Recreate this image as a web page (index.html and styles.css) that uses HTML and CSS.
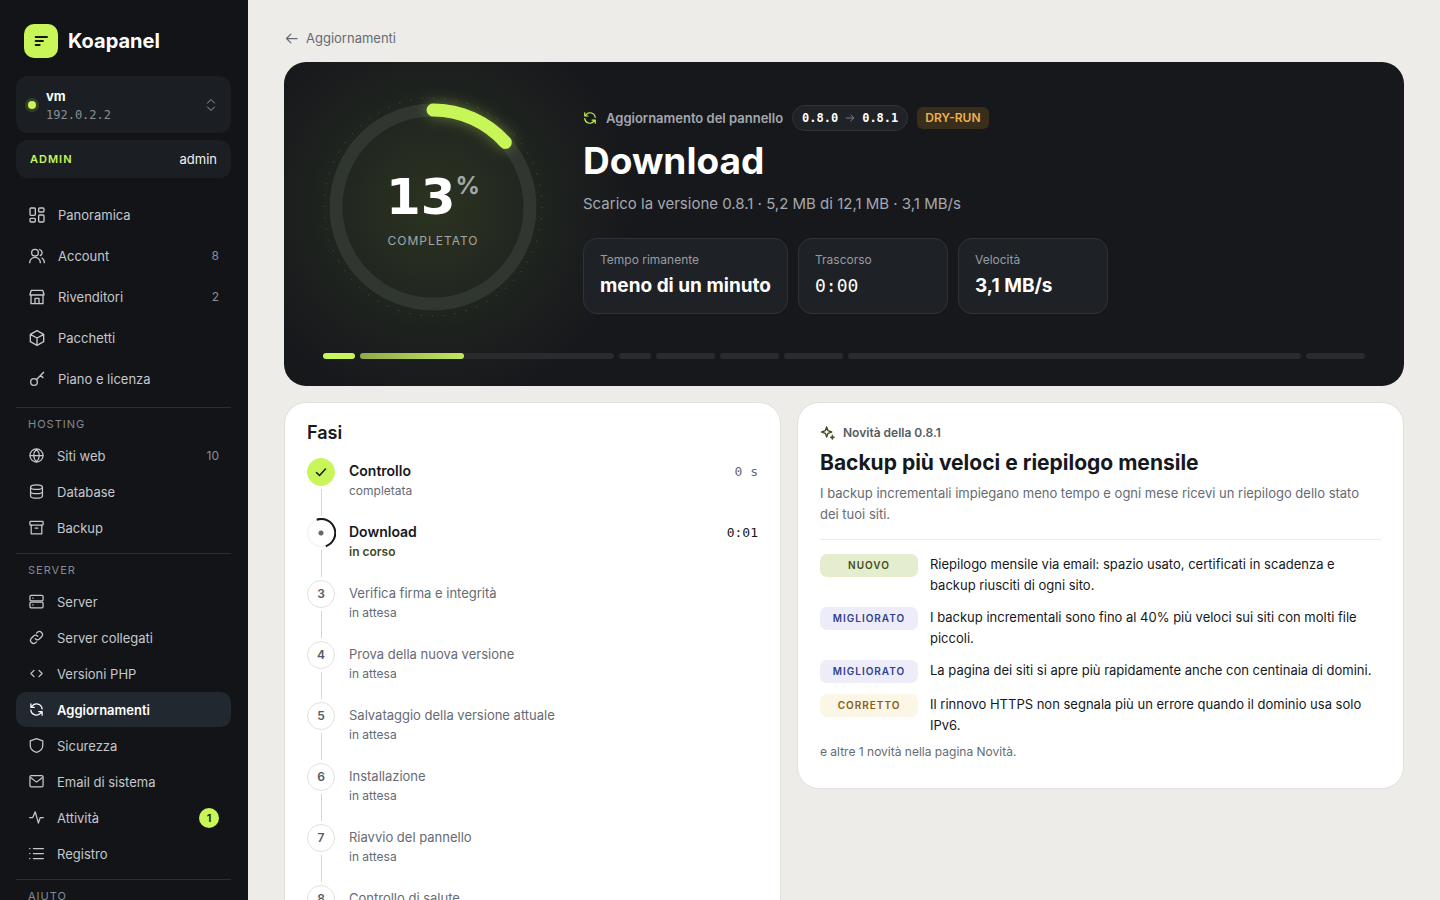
FILE: index.html
```html
<!DOCTYPE html>
<html lang="it">

<head>
    <meta charset="UTF-8">
    <meta name="viewport" content="width=device-width, initial-scale=1.0">
    <title>Aggiornamenti - Koapanel</title>
    <link rel="stylesheet" href="styles.css">
</head>

<body>
    <!-- shared icons -->
    <svg class="sprite" aria-hidden="true">
        <symbol id="i-refresh" viewBox="0 0 24 24">
            <path d="M21 11A9 9 0 0 0 5 6.500L3 8.500M3 3v5.500H8.500" />
            <path d="M3 13a9 9 0 0 0 16 4.500L21 15.500M21 21V15.500H15.500" />
        </symbol>
        <symbol id="i-arrow" viewBox="0 0 24 24">
            <path d="M3 12h18M14 5l7 7-7 7" />
        </symbol>
    </svg>

    <div class="app">
        <aside class="sidebar">
            <a class="brand" href="#">
                <span class="brand-mark">
                    <svg viewBox="0 0 24 24"><path d="M4 6h17M4 12h11M4 18h6" /></svg>
                </span>
                Koapanel
            </a>

            <button class="server-switch" type="button">
                <span class="status-dot"></span>
                <span class="server-info">
                    <strong>vm</strong>
                    <span class="server-ip">192.0.2.2</span>
                </span>
                <svg class="chevrons" viewBox="0 0 24 24"><path d="M5 8l7-7 7 7M5 16l7 7 7-7" /></svg>
            </button>

            <div class="user">
                <span class="role">ADMIN</span>
                <span class="user-name">admin</span>
            </div>

            <nav class="nav nav-main">
                <a href="#">
                    <svg viewBox="0 0 24 24"><rect x="1.500" y="1.500" width="8" height="11" rx="1.500" /><rect x="14.500" y="1.500" width="8" height="6" rx="1.500" /><rect x="14.500" y="12" width="8" height="10.500" rx="1.500" /><rect x="1.500" y="17" width="8" height="5.500" rx="1.500" /></svg>
                    Panoramica
                </a>
                <a href="#">
                    <svg viewBox="0 0 24 24"><circle cx="9" cy="7" r="5" /><path d="M1 22a8 8 0 0 1 16 0M16 2.300a5 5 0 0 1 1 9.200M19.500 15A8 8 0 0 1 23 22" /></svg>
                    Account <span class="count">8</span>
                </a>
                <a href="#">
                    <svg viewBox="0 0 24 24"><path d="M3 9v13h18V9M1.500 8l2-6h17l2 6v1h-21zM9 22v-8h6v8" /></svg>
                    Rivenditori <span class="count">2</span>
                </a>
                <a href="#">
                    <svg viewBox="0 0 24 24"><path d="M12 1l10 5.500v11L12 23 2 17.500v-11zM2.500 7L12 12l9.500-5M12 12v11" /></svg>
                    Pacchetti
                </a>
                <a href="#">
                    <svg viewBox="0 0 24 24"><circle cx="7.500" cy="16.500" r="5" /><path d="M11 13L22 2M17.500 6.500L21 10" /></svg>
                    Piano e licenza
                </a>
            </nav>

            <nav class="nav">
                <h2>HOSTING</h2>
                <a href="#">
                    <svg viewBox="0 0 24 24"><circle cx="12" cy="12" r="10.500" /><path d="M2 12h20M12 2c-6 6-6 14 0 20M12 2c6 6 6 14 0 20" /></svg>
                    Siti web <span class="count">10</span>
                </a>
                <a href="#">
                    <svg viewBox="0 0 24 24"><ellipse cx="12" cy="5" rx="9.500" ry="3.500" /><path d="M2.500 5v14c0 4.700 19 4.700 19 0V5M2.500 12c0 4.700 19 4.700 19 0" /></svg>
                    Database
                </a>
                <a href="#">
                    <svg viewBox="0 0 24 24"><rect x="1.500" y="2" width="21" height="6" rx="1" /><path d="M3.500 8v14h17V8M10 13h4" /></svg>
                    Backup
                </a>
            </nav>

            <nav class="nav">
                <h2>SERVER</h2>
                <a href="#">
                    <svg viewBox="0 0 24 24"><rect x="1.500" y="2" width="21" height="9" rx="2" /><rect x="1.500" y="13" width="21" height="9" rx="2" /><path d="M6 6.500h.5M6 17.500h.5" /></svg>
                    Server
                </a>
                <a href="#">
                    <svg viewBox="0 0 24 24"><path d="M10 14a5 5 0 0 0 7 0l3.500-3.500a5 5 0 0 0-7-7L12 5M14 10a5 5 0 0 0-7 0l-3.500 3.500a5 5 0 0 0 7 7L12 19" /></svg>
                    Server collegati
                </a>
                <a href="#">
                    <svg viewBox="0 0 24 24"><path d="M8 7l-5 5 5 5M16 7l5 5-5 5" /></svg>
                    Versioni PHP
                </a>
                <a class="active" href="#" aria-current="page">
                    <svg><use href="#i-refresh" /></svg>
                    Aggiornamenti
                </a>
                <a href="#">
                    <svg viewBox="0 0 24 24"><path d="M12 1l10 3.500v7.500c0 5-4 9-10 11-6-2-10-6-10-11V4.500z" /></svg>
                    Sicurezza
                </a>
                <a href="#">
                    <svg viewBox="0 0 24 24"><rect x="1.500" y="2.500" width="21" height="18" rx="2" /><path d="M3 6l9 7 9-7" /></svg>
                    Email di sistema
                </a>
                <a href="#">
                    <svg viewBox="0 0 24 24"><path d="M1 12h5l4-9 5 18 3-9h5" /></svg>
                    Attività <span class="badge">1</span>
                </a>
                <a href="#">
                    <svg viewBox="0 0 24 24"><path d="M7 4h16M7 12h16M7 20h16M1 4h.5M1 12h.5M1 20h.5" /></svg>
                    Registro
                </a>
            </nav>

            <nav class="nav">
                <h2>AIUTO</h2>
            </nav>
        </aside>

        <main class="content">
            <a class="back" href="#">
                <svg viewBox="0 0 24 24"><path d="M21 12H4M11 5l-7 7 7 7" /></svg>
                Aggiornamenti
            </a>

            <section class="hero">
                <div class="hero-main">
                    <div class="ring">
                        <svg viewBox="0 0 220 220">
                            <circle class="ring-dots" cx="110" cy="110" r="109" pathLength="600" />
                            <circle class="ring-track" cx="110" cy="110" r="97" />
                            <circle class="ring-value" cx="110" cy="110" r="97" pathLength="100" stroke-dasharray="13.400 100" />
                        </svg>
                        <div class="ring-label">
                            <div class="percent">13<sup>%</sup></div>
                            <span>COMPLETATO</span>
                        </div>
                    </div>

                    <div class="hero-text">
                        <div class="hero-meta">
                            <svg class="hero-icon"><use href="#i-refresh" /></svg>
                            <span class="hero-kind">Aggiornamento del pannello</span>
                            <span class="versions">0.8.0 <svg><use href="#i-arrow" /></svg> 0.8.1</span>
                            <span class="dry-run">DRY-RUN</span>
                        </div>
                        <h1>Download</h1>
                        <p>Scarico la versione 0.8.1 · 5,2 MB di 12,1 MB · 3,1 MB/s</p>
                        <dl class="stats">
                            <div class="stat">
                                <dt>Tempo rimanente</dt>
                                <dd>meno di un minuto</dd>
                            </div>
                            <div class="stat">
                                <dt>Trascorso</dt>
                                <dd class="mono">0:00</dd>
                            </div>
                            <div class="stat">
                                <dt>Velocità</dt>
                                <dd>3,1 MB/s</dd>
                            </div>
                        </dl>
                    </div>
                </div>

                <div class="segments">
                    <span class="done" style="flex-grow: 32"></span>
                    <span style="flex-grow: 254"><i style="width: 41%"></i></span>
                    <span style="flex-grow: 32"></span>
                    <span style="flex-grow: 59"></span>
                    <span style="flex-grow: 59"></span>
                    <span style="flex-grow: 59"></span>
                    <span style="flex-grow: 453"></span>
                    <span style="flex-grow: 59"></span>
                </div>
            </section>

            <div class="columns">
                <section class="card phases">
                    <h2>Fasi</h2>
                    <ol>
                        <li class="done">
                            <span class="mark"><svg viewBox="0 0 24 24"><path d="M3 13l6 6L21 6" /></svg></span>
                            <div><strong>Controllo</strong><small>completata</small></div>
                            <time>0 s</time>
                        </li>
                        <li class="current">
                            <span class="mark">
                                <svg viewBox="0 0 30 30"><path d="M10.700 1.700A14 14 0 1 1 19.800 28.200" /></svg>
                            </span>
                            <div><strong>Download</strong><small>in corso</small></div>
                            <time>0:01</time>
                        </li>
                        <li>
                            <span class="mark">3</span>
                            <div><strong>Verifica firma e integrità</strong><small>in attesa</small></div>
                        </li>
                        <li>
                            <span class="mark">4</span>
                            <div><strong>Prova della nuova versione</strong><small>in attesa</small></div>
                        </li>
                        <li>
                            <span class="mark">5</span>
                            <div><strong>Salvataggio della versione attuale</strong><small>in attesa</small></div>
                        </li>
                        <li>
                            <span class="mark">6</span>
                            <div><strong>Installazione</strong><small>in attesa</small></div>
                        </li>
                        <li>
                            <span class="mark">7</span>
                            <div><strong>Riavvio del pannello</strong><small>in attesa</small></div>
                        </li>
                        <li>
                            <span class="mark">8</span>
                            <div><strong>Controllo di salute</strong><small>in attesa</small></div>
                        </li>
                    </ol>
                </section>

                <section class="card news">
                    <div class="news-kicker">
                        <svg viewBox="0 0 24 24"><path d="M10 3l2 5.500 5.500 2-5.500 2-2 5.500-2-5.500-5.500-2L8 8.500z" /><path class="fill" d="M18.500 15l1 2.500 2.500 1-2.500 1-1 2.500-1-2.500-2.500-1 2.500-1z" /></svg>
                        Novità della 0.8.1
                    </div>
                    <h2>Backup più veloci e riepilogo mensile</h2>
                    <p class="lead">I backup incrementali impiegano meno tempo e ogni mese ricevi un riepilogo dello stato dei tuoi siti.</p>
                    <ul>
                        <li>
                            <span class="tag tag-new">NUOVO</span>
                            <p>Riepilogo mensile via email: spazio usato, certificati in scadenza e backup riusciti di ogni sito.</p>
                        </li>
                        <li>
                            <span class="tag tag-better">MIGLIORATO</span>
                            <p>I backup incrementali sono fino al 40% più veloci sui siti con molti file piccoli.</p>
                        </li>
                        <li>
                            <span class="tag tag-better">MIGLIORATO</span>
                            <p>La pagina dei siti si apre più rapidamente anche con centinaia di domini.</p>
                        </li>
                        <li>
                            <span class="tag tag-fix">CORRETTO</span>
                            <p>Il rinnovo HTTPS non segnala più un errore quando il dominio usa solo IPv6.</p>
                        </li>
                    </ul>
                    <p class="more">e altre 1 novità nella pagina Novità.</p>
                </section>
            </div>
        </main>
    </div>
</body>

</html>
```
FILE: styles.css
```css
:root {
    --bg: #edece8;
    --dark: #121418;
    --panel: #1b1f23;
    --hero: #17181c;
    --lime: #c8f558;
    --ink: #15181c;
    --muted: #666b73;
    --line: #e2e1dd;
    --mono: "DejaVu Sans Mono", monospace;
}

* {
    box-sizing: border-box;
}

body {
    margin: 0;
    background-color: var(--bg);
    color: var(--ink);
    font-family: Inter, "Liberation Sans", sans-serif;
    font-size: 13px;
    line-height: 20px;
}

h1,
h2,
p,
dl,
dd,
ol,
ul {
    margin: 0;
    padding: 0;
}

ol,
ul {
    list-style: none;
}

a {
    color: inherit;
    text-decoration: none;
}

svg {
    display: block;
    flex: none;
    fill: none;
    stroke: currentColor;
    stroke-width: 2;
    stroke-linecap: round;
    stroke-linejoin: round;
}

.sprite {
    display: none;
}

.app {
    display: flex;
    align-items: flex-start;
}

/* Sidebar */
.sidebar {
    position: sticky;
    top: 0;
    flex: none;
    width: 248px;
    height: 100vh;
    padding: 24px 17px 0 16px;
    overflow: hidden;
    background-color: var(--dark);
    color: #c5c8cc;
}

.brand {
    display: flex;
    align-items: center;
    gap: 10px;
    margin: 0 8px 18px;
    color: #fff;
    font-size: 20px;
    font-weight: 700;
}

.brand-mark {
    display: grid;
    place-items: center;
    width: 34px;
    height: 34px;
    border-radius: 10px;
    background-color: var(--lime);
    color: var(--ink);
}

.brand-mark svg {
    width: 18px;
    height: 16px;
    stroke-width: 3;
}

.server-switch {
    display: flex;
    align-items: center;
    gap: 10px;
    width: 100%;
    height: 57px;
    margin-bottom: 7px;
    padding: 0 14px 0 12px;
    border: 0;
    border-radius: 12px;
    background-color: var(--panel);
    color: #fff;
    font: inherit;
    text-align: left;
    cursor: pointer;
}

.status-dot {
    width: 8px;
    height: 8px;
    border-radius: 50%;
    background-color: var(--lime);
    box-shadow: 0 0 0 3px #353f25;
}

.server-info {
    flex: 1;
    display: flex;
    flex-direction: column;
}

.server-ip {
    color: #8b8f96;
    font-family: var(--mono);
    font-size: 12px;
    line-height: 18px;
}

.chevrons {
    width: 12px;
    height: 12px;
    color: #9a9ea5;
}

.user {
    display: flex;
    align-items: center;
    justify-content: space-between;
    height: 38px;
    margin-bottom: 17px;
    padding: 0 14px;
    border-radius: 12px;
    background-color: var(--panel);
}

.role {
    color: var(--lime);
    font-size: 11px;
    font-weight: 600;
    letter-spacing: 1px;
}

.user-name {
    color: #f0f1f2;
}

.nav {
    display: flex;
    flex-direction: column;
    gap: 1px;
    margin-bottom: 8px;
    border-top: 1px solid #2b2e33;
}

.nav-main {
    border-top: 0;
}

.nav h2 {
    margin: 6px 12px 3px;
    color: #858991;
    font-size: 11px;
    font-weight: 400;
    letter-spacing: 1px;
}

.nav a {
    display: flex;
    align-items: center;
    gap: 13px;
    height: 35px;
    padding: 0 12px 0 13px;
    border-radius: 10px;
}

.nav-main a {
    height: 40px;
}

.nav svg {
    width: 15px;
    height: 15px;
}

.nav-main svg {
    width: 16px;
    height: 16px;
}

.nav .active {
    background-color: #22282f;
    color: #fff;
    font-weight: 600;
}

.count {
    margin-left: auto;
    color: #8b8f96;
    font-size: 12px;
}

.badge {
    width: 20px;
    margin-left: auto;
    border-radius: 10px;
    background-color: var(--lime);
    color: var(--ink);
    font-size: 11px;
    font-weight: 600;
    text-align: center;
}

/* Content */
.content {
    flex: 1;
    min-width: 0;
    padding: 28px 36px;
}

.back {
    display: inline-flex;
    align-items: center;
    gap: 7px;
    margin-bottom: 14px;
    color: var(--muted);
}

.back svg {
    width: 15px;
    height: 15px;
}

.hero {
    padding: 35px 39px 27px;
    border-radius: 22px;
    background: radial-gradient(circle at 149px 145px, #2b3321 0, #242a20 70px, #1d211e 125px, var(--hero) 200px) var(--hero);
    color: #fff;
}

.hero-main {
    display: flex;
    align-items: center;
    gap: 40px;
    margin-bottom: 36px;
}

.ring {
    display: grid;
    flex: none;
    width: 220px;
}

.ring svg {
    grid-area: 1 / 1;
    overflow: visible;
    transform: rotate(-90deg);
}

.ring-dots {
    stroke: #4a5446;
    stroke-width: 1;
    stroke-dasharray: 1 9;
    stroke-linecap: butt;
}

.ring-track {
    stroke: #303630;
    stroke-width: 13;
}

.ring-value {
    stroke: var(--lime);
    stroke-width: 13;
    filter: drop-shadow(0 0 7px rgba(200, 245, 88, 0.4));
}

.ring-label {
    grid-area: 1 / 1;
    align-self: center;
    color: #a4a7a8;
    font-size: 12px;
    letter-spacing: 1px;
    text-align: center;
}

.percent {
    color: #fff;
    font-family: "DejaVu Sans", sans-serif;
    font-size: 50px;
    font-weight: 700;
    line-height: 68px;
    letter-spacing: 0;
}

.percent sup {
    color: #a4a7a8;
    font-family: Inter, sans-serif;
    font-size: 24px;
    font-weight: 700;
    line-height: 24px;
    vertical-align: 20px;
}

.hero-text {
    padding-top: 4px;
}

.hero-meta {
    display: flex;
    align-items: center;
    gap: 9px;
    margin-bottom: 8px;
}

.hero-icon {
    width: 14px;
    height: 14px;
    color: var(--lime);
}

.hero-kind {
    color: #a4a8af;
    font-weight: 600;
}

.versions {
    display: flex;
    align-items: center;
    gap: 7px;
    padding: 2px 9px;
    border: 1px solid #303338;
    border-radius: 13px;
    background-color: #1f2227;
    font-family: var(--mono);
    font-size: 12px;
    font-weight: 700;
}

.versions svg {
    width: 10px;
    height: 10px;
    color: #8b8f96;
}

.dry-run {
    padding: 1px 8px;
    border-radius: 6px;
    background-color: #392d1c;
    color: #efb04d;
    font-size: 12px;
    font-weight: 600;
}

h1 {
    font-size: 37px;
    font-weight: 700;
    line-height: 44px;
}

.hero-text p {
    margin: 9px 0 22px;
    color: #a4a8af;
    font-size: 15px;
    line-height: 24px;
}

.stats {
    display: flex;
    gap: 10px;
}

.stat {
    min-width: 150px;
    padding: 11px 16px;
    border: 1px solid #2e3237;
    border-radius: 14px;
    background-color: #1e2126;
}

.stat dt {
    color: #989ca3;
    font-size: 12px;
}

.stat dd {
    font-size: 19px;
    font-weight: 700;
    line-height: 32px;
}

.stat .mono {
    font-family: var(--mono);
    font-size: 18px;
    font-weight: 400;
}

.segments {
    display: flex;
    gap: 5px;
}

.segments span {
    flex: 1 1 0;
    height: 6px;
    overflow: hidden;
    border-radius: 3px;
    background-color: #292b2f;
}

.segments .done {
    background-color: var(--lime);
}

.segments i {
    display: block;
    height: 6px;
    border-radius: 0 3px 3px 0;
    background: linear-gradient(90deg, #93a84b, #bfe65a);
}

.columns {
    display: grid;
    grid-template-columns: 497fr 607fr;
    align-items: start;
    gap: 16px;
    margin-top: 16px;
}

.card {
    padding: 20px 22px;
    border: 1px solid var(--line);
    border-radius: 22px;
    background-color: #fff;
}

/* Phases */
.phases h2 {
    margin-bottom: 15px;
    font-size: 18px;
    font-weight: 600;
}

.phases li {
    position: relative;
    display: flex;
    gap: 14px;
    height: 61px;
    color: var(--muted);
}

.phases li:not(:last-child)::after {
    content: "";
    position: absolute;
    top: 31px;
    bottom: 3px;
    left: 14px;
    width: 1px;
    background-color: #d5d6d5;
}

.phases .done::after {
    background-color: #999c9d;
}

.phases li div {
    flex: 1;
    display: flex;
    flex-direction: column;
    padding-top: 2px;
}

.phases strong {
    font-weight: 400;
    line-height: 22px;
}

.phases small {
    font-size: 12px;
    line-height: 17px;
}

.phases time {
    padding-top: 4px;
    font-family: var(--mono);
}

.mark {
    display: grid;
    place-items: center;
    width: 28px;
    height: 28px;
    border: 1px solid var(--line);
    border-radius: 50%;
    color: #555a62;
    font-size: 12px;
    font-weight: 600;
}

.phases .done strong,
.phases .current strong {
    color: var(--ink);
    font-size: 14px;
    font-weight: 600;
}

.phases .done .mark {
    border-color: var(--lime);
    background-color: var(--lime);
    color: var(--ink);
}

.done .mark svg {
    width: 12px;
    height: 12px;
    stroke-width: 3;
}

.current .mark {
    border-color: #efefed;
    background: radial-gradient(circle, #666 0, #666 2px, transparent 3px);
}

.current .mark svg {
    width: 30px;
    height: 30px;
    margin: -2px;
    color: var(--ink);
    stroke-linecap: butt;
}

.phases .current small {
    color: #3f4a1c;
    font-weight: 600;
}

.phases .current time {
    color: var(--ink);
}

/* News */
.news-kicker {
    display: flex;
    align-items: center;
    gap: 7px;
    color: #565b63;
    font-size: 12px;
    font-weight: 600;
}

.news-kicker svg {
    width: 16px;
    height: 16px;
    color: #3f4a1c;
}

.news-kicker .fill {
    fill: currentColor;
    stroke-width: 1;
}

.news h2 {
    margin: 4px 0;
    font-size: 21px;
    font-weight: 700;
    line-height: 32px;
}

.news .lead {
    padding-bottom: 14px;
    border-bottom: 1px solid #ebebea;
    color: var(--muted);
    line-height: 21px;
}

.news ul {
    display: grid;
    gap: 11px;
    margin-top: 14px;
}

.news li {
    display: grid;
    grid-template-columns: 98px 1fr;
    gap: 12px;
    align-items: start;
    line-height: 21px;
}

.tag {
    border-radius: 7px;
    font-size: 10px;
    font-weight: 600;
    line-height: 23px;
    letter-spacing: 1px;
    text-align: center;
}

.tag-new {
    background-color: #e4eecf;
    color: #3f4f1b;
}

.tag-better {
    background-color: #ecedf8;
    color: #303f91;
}

.tag-fix {
    background-color: #fcf6e6;
    color: #885d13;
}

.news .more {
    margin: 6px 0;
    color: var(--muted);
    font-size: 12px;
}
```
